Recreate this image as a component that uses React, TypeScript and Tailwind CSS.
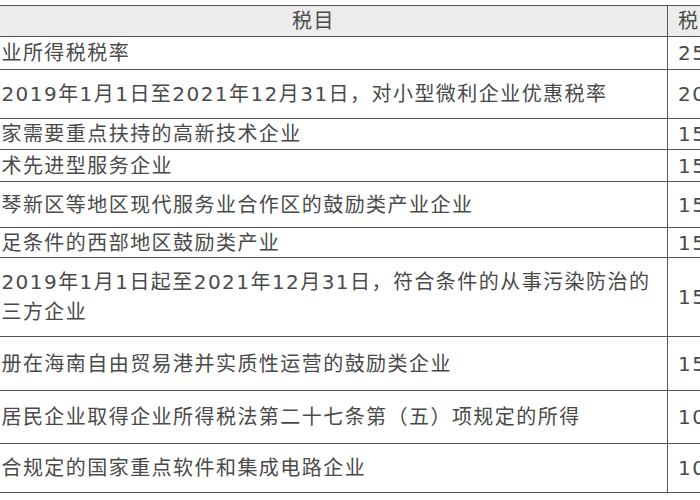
const rows: { name: React.ReactNode; rate: string; h: string }[] = [
  { name: "企业所得税税率", rate: "25%", h: "h-[33px]" },
  { name: "自2019年1月1日至2021年12月31日，对小型微利企业优惠税率", rate: "20%", h: "h-[49px]" },
  { name: "国家需要重点扶持的高新技术企业", rate: "15%", h: "h-[31px]" },
  { name: "技术先进型服务企业", rate: "15%", h: "h-[32px]" },
  { name: "横琴新区等地区现代服务业合作区的鼓励类产业企业", rate: "15%", h: "h-[46px]" },
  { name: "满足条件的西部地区鼓励类产业", rate: "15%", h: "h-[30px]" },
  {
    name: (
      <>
        自2019年1月1日起至2021年12月31日，符合条件的从事污染防治的
        <br />
        第三方企业
      </>
    ),
    rate: "15%",
    h: "h-[79px]",
  },
  { name: "注册在海南自由贸易港并实质性运营的鼓励类企业", rate: "15%", h: "h-[54px]" },
  { name: "非居民企业取得企业所得税法第二十七条第（五）项规定的所得", rate: "10%", h: "h-[53px]" },
  { name: "符合规定的国家重点软件和集成电路企业", rate: "10%", h: "h-[49px]" },
];

export default function App() {
  return (
    <div
      className="w-[700px] h-[500px] overflow-hidden bg-white pt-[5px] text-[#4a4a4a] text-[20px] tracking-[1.45px]"
      style={{ fontFamily: '"DejaVu Sans", "Noto Sans CJK SC", sans-serif' }}
    >
      <div className="ml-[-40px] w-[820px] border-t border-[#555]">
        <div className="grid grid-cols-[708px_112px] h-[31px] bg-[#ececec] border-b border-[#555]">
          <div className="flex items-center justify-center border-r border-[#555]">税目</div>
          <div className="flex items-center pl-[10px]">税率</div>
        </div>
        {rows.map((r, i) => (
          <div key={i} className={`grid grid-cols-[708px_112px] ${r.h} border-b border-[#555]`}>
            <div className="flex items-center pl-[20px] border-r border-[#555] leading-[30px] whitespace-nowrap">
              <div>{r.name}</div>
            </div>
            <div className="flex items-center pl-[10px]">{r.rate}</div>
          </div>
        ))}
      </div>
    </div>
  );
}
